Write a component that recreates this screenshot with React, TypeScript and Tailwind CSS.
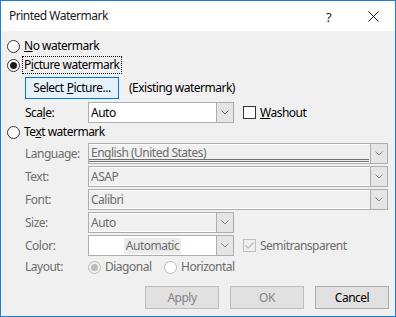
import React from "react";

const font = { fontFamily: '"Noto Sans", "Segoe UI", sans-serif' };

function Chevron({ disabled }: { disabled?: boolean }) {
  return (
    <svg width="8" height="5" viewBox="0 0 8 5">
      <path d="M0.5 0.5 L4 4 L7.5 0.5" fill="none" stroke={disabled ? "#8a8a8a" : "#6a6a6a"} strokeWidth="1" />
    </svg>
  );
}

function Radio({ checked, disabled }: { checked?: boolean; disabled?: boolean }) {
  return (
    <span
      className={
        "w-[13px] h-[13px] rounded-full border flex items-center justify-center shrink-0 " +
        (disabled ? "border-[#bcbcbc] " : "border-[#333333] bg-white ") +
        (disabled && checked ? "bg-[#f0f0f0]" : disabled ? "bg-white" : "")
      }
    >
      {checked && (
        <span className={"w-[7px] h-[7px] rounded-full " + (disabled ? "bg-[#bcbcbc]" : "bg-[#1a1a1a]")} />
      )}
    </span>
  );
}

function Combo({
  text,
  width,
  disabled,
  white,
  center,
  doubleLine,
}: {
  text: string;
  width: string;
  disabled?: boolean;
  white?: boolean;
  center?: boolean;
  doubleLine?: boolean;
}) {
  return (
    <div
      className={
        "h-[21px] border border-[#adadad] flex items-stretch " +
        width +
        (white ? " bg-white" : " bg-[#f0f0f0]")
      }
    >
      <div
        className={
          "flex-1 flex relative " +
          (doubleLine ? "items-start pt-[2px] " : "items-center ") +
          (center ? "justify-center " : "pl-[2px] ") +
          (!white ? "border-y border-white " : "")
        }
      >
        <span
          className={
            "text-[12px] leading-none " +
            (disabled ? "text-[#6d6d6d]" : "text-black") +
            (center ? " bg-[#ececec] px-[2px] py-[2px]" : "")
          }
        >
          {text}
        </span>
        {doubleLine && (
          <div className="absolute left-0 right-[1px] bottom-[0px] h-[3px] border-y border-[#707070]" />
        )}
      </div>
      <div className="w-[17px] border-l border-[#adadad] bg-[#e5e5e5] flex items-center justify-center">
        <Chevron disabled={disabled} />
      </div>
    </div>
  );
}

export default function App() {
  const label = "w-[63px] text-[12px] text-[#6d6d6d] leading-none";
  return (
    <div
      className="w-[396px] h-[317px] border border-[#1a7fd4] flex flex-col bg-[#f0f0f0] text-[12px] text-black tracking-[-0.5px]"
      style={font}
    >
      <div className="h-[30px] bg-white flex items-center relative shrink-0">
        <span className="ml-[8px] text-[12px] text-[#1a1a1a]">Printed Watermark</span>
        <span className="absolute left-[325px] top-[7px] text-[13px] text-[#222]">?</span>
        <svg className="absolute left-[367px] top-[10px]" width="11" height="11" viewBox="0 0 11 11">
          <path d="M0.5 0.5 L10.5 10.5 M10.5 0.5 L0.5 10.5" stroke="#111" strokeWidth="1" />
        </svg>
      </div>

      <div className="flex flex-col pl-[6px] pr-[6px]">
        <div className="mt-[6px] h-[18px] flex items-center gap-[4px]">
          <Radio />
          <span>
            <span className="underline">N</span>o watermark
          </span>
        </div>
        <div className="mt-[1px] h-[18px] flex items-center gap-[2px]">
          <Radio checked />
          <span className="border border-dotted border-black px-[1px] h-[18px] flex items-center">
            P<span className="underline">i</span>cture watermark
          </span>
        </div>
        <div className="mt-[3px] h-[22px] flex items-center pl-[18px]">
          <button className="w-[94px] h-[22px] border border-[#0078d7] bg-[#e5f1fb] text-[12px] flex items-center justify-center">
            Select <span className="underline ml-[3px]">P</span>icture...
          </button>
          <span className="ml-[10px] text-[12px]">(Existing watermark)</span>
        </div>
        <div className="mt-[3px] h-[21px] flex items-center pl-[18px]">
          <span className="w-[63px] leading-none">
            Sca<span className="underline">l</span>e:
          </span>
          <Combo text="Auto" width="w-[146px]" white />
          <span className="ml-[9px] w-[13px] h-[13px] border border-[#333] bg-white" />
          <span className="ml-[4px]">
            <span className="underline">W</span>ashout
          </span>
        </div>
        <div className="h-[18px] flex items-center gap-[4px]">
          <Radio />
          <span>
            Te<span className="underline">x</span>t watermark
          </span>
        </div>
        <div className="mt-[2px] flex flex-col gap-[2px] pl-[18px]">
          <div className="flex items-center">
            <span className={label}>Language:</span>
            <Combo text="English (United States)" width="w-[300px]" disabled doubleLine />
          </div>
          <div className="flex items-center">
            <span className={label}>Text:</span>
            <Combo text="ASAP" width="w-[300px]" disabled />
          </div>
          <div className="flex items-center">
            <span className={label}>Font:</span>
            <Combo text="Calibri" width="w-[300px]" disabled />
          </div>
          <div className="flex items-center">
            <span className={label}>Size:</span>
            <Combo text="Auto" width="w-[146px]" disabled />
          </div>
          <div className="flex items-center">
            <span className={label}>Color:</span>
            <Combo text="Automatic" width="w-[146px]" disabled white center />
            <span className="ml-[9px] w-[13px] h-[13px] border border-[#bcbcbc] bg-[#f0f0f0] flex items-center justify-center">
              <svg width="11" height="11" viewBox="0 0 11 11">
                <path d="M1.5 5.5 L4.2 8.2 L9.5 2.5" fill="none" stroke="#bcbcbc" strokeWidth="1.2" />
              </svg>
            </span>
            <span className="ml-[4px] text-[#6d6d6d]">Semitransparent</span>
          </div>
        </div>
        <div className="mt-[3px] h-[16px] flex items-center pl-[18px]">
          <span className={label}>Layout:</span>
          <Radio checked disabled />
          <span className="ml-[4px] text-[#6d6d6d] w-[59px]">Diagonal</span>
          <Radio disabled />
          <span className="ml-[4px] text-[#6d6d6d]">Horizontal</span>
        </div>
        <div className="mt-[11px] flex justify-end gap-[11px] pr-[0px]">
          <button className="w-[74px] h-[23px] border border-[#bfbfbf] bg-[#e1e1e1] text-[#838383] text-[12px]">
            Apply
          </button>
          <button className="w-[74px] h-[23px] border border-[#bfbfbf] bg-[#e1e1e1] text-[#838383] text-[12px]">
            OK
          </button>
          <button className="w-[74px] h-[23px] border border-[#adadad] bg-[#e1e1e1] text-black text-[12px]">
            Cancel
          </button>
        </div>
      </div>
    </div>
  );
}
